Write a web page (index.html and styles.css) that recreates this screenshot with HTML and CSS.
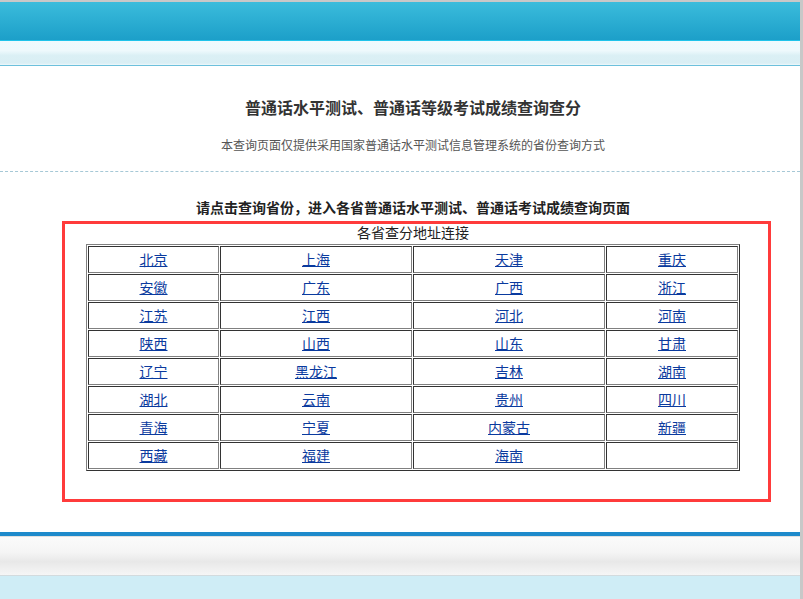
FILE: index.html
```html
<!DOCTYPE html>
<html lang="zh-CN">
<head>
<meta charset="utf-8">
<title>普通话水平测试、普通话等级考试成绩查询查分</title>
<link rel="stylesheet" href="styles.css">
</head>
<body>
<div class="page">
  <header class="header">
    <div class="header-bar"></div>
    <div class="header-sub"></div>
  </header>
  <main class="main">
    <h1 class="title">普通话水平测试、普通话等级考试成绩查询查分</h1>
    <p class="subtitle">本查询页面仅提供采用国家普通话水平测试信息管理系统的省份查询方式</p>
  </main>
  <div class="divider"></div>
  <div class="main">
    <h2 class="heading">请点击查询省份，进入各省普通话水平测试、普通话考试成绩查询页面</h2>
  </div>
  <section class="box">
    <table class="prov">
      <caption>各省查分地址连接</caption>
      <tbody>
        <tr><td class="c1"><a href="#">北京</a></td><td class="c2"><a href="#">上海</a></td><td class="c3"><a href="#">天津</a></td><td class="c4"><a href="#">重庆</a></td></tr>
        <tr><td><a href="#">安徽</a></td><td><a href="#">广东</a></td><td><a href="#">广西</a></td><td><a href="#">浙江</a></td></tr>
        <tr><td><a href="#">江苏</a></td><td><a href="#">江西</a></td><td><a href="#">河北</a></td><td><a href="#">河南</a></td></tr>
        <tr><td><a href="#">陕西</a></td><td><a href="#">山西</a></td><td><a href="#">山东</a></td><td><a href="#">甘肃</a></td></tr>
        <tr><td><a href="#">辽宁</a></td><td><a href="#">黑龙江</a></td><td><a href="#">吉林</a></td><td><a href="#">湖南</a></td></tr>
        <tr><td><a href="#">湖北</a></td><td><a href="#">云南</a></td><td><a href="#">贵州</a></td><td><a href="#">四川</a></td></tr>
        <tr><td><a href="#">青海</a></td><td><a href="#">宁夏</a></td><td><a href="#">内蒙古</a></td><td><a href="#">新疆</a></td></tr>
        <tr><td><a href="#">西藏</a></td><td><a href="#">福建</a></td><td><a href="#">海南</a></td><td></td></tr>
      </tbody>
    </table>
  </section>
  <footer class="footer">
    <div class="footer-line"></div>
    <div class="footer-band"></div>
    <div class="footer-base"></div>
  </footer>
</div>
</body>
</html>
```

FILE: styles.css
```css
html, body {
  margin: 0;
  padding: 0;
}
body {
  background: #c8c8c8;
  padding-top: 2px;
  font-family: "Noto Sans CJK SC", "Liberation Sans", sans-serif;
  overflow: hidden;
}
.page {
  width: 800px;
  background: #ffffff;
  height: 597px;
  display: flex;
  flex-direction: column;
}
.header-bar {
  height: 38px;
  background: linear-gradient(#3bbcdc, #1c9fc9);
  border-bottom: 1px solid #1fc3ea;
}
.header-sub {
  height: 24px;
  background: linear-gradient(#effafd 0%, #eef9fc 40%, #dbf0f5 60%, #d9eef4 92%, #eef8fb 100%);
  border-bottom: 1px solid #6cc0dc;
}
.main {
  padding-left: 26px;
  text-align: center;
}
.title {
  margin: 31px 0 0;
  font-size: 16px;
  line-height: 20px;
  font-weight: bold;
  color: #333333;
}
.subtitle {
  margin: 20px 0 0;
  font-size: 12px;
  line-height: 16px;
  color: #555555;
}
.divider {
  margin-top: 18px;
  border-top: 1px dashed #a6c8d6;
}
.heading {
  margin: 26px 0 0;
  font-size: 14px;
  line-height: 18px;
  font-weight: bold;
  color: #222222;
}
.box {
  margin: 5px 0 0 62px;
  width: 709px;
  height: 281px;
  box-sizing: border-box;
  border: 3px solid #ff3b3b;
}
.prov {
  margin-left: 21px;
  width: 654px;
  table-layout: fixed;
  border-collapse: separate;
  border-spacing: 1px;
  border: 1px solid;
  border-color: #808080 #333333 #333333 #808080;
  box-sizing: border-box;
}
.prov caption {
  font-size: 14px;
  line-height: 16px;
  padding-bottom: 4px;
  color: #222222;
}
.prov td {
  box-sizing: border-box;
  height: 27px;
  padding: 0 0 1px;
  border: 1px solid;
  border-color: #333333 #808080 #808080 #333333;
  text-align: center;
  vertical-align: middle;
  font-size: 14px;
  line-height: 16px;
}
.prov .c1 { width: 131px; }
.prov .c2 { width: 192px; }
.prov .c3 { width: 192px; }
.prov .c4 { width: 132px; }
.prov a,
.prov a:visited {
  color: #0a3a9e;
  text-decoration: underline;
}
.footer {
  margin-top: 30px;
  flex: 1;
  display: flex;
  flex-direction: column;
}
.footer-line {
  height: 4px;
  background: #1e8acb;
}
.footer-band {
  height: 38px;
  border-top: 1px solid #e0e0e0;
  background: linear-gradient(#fbfbfb 0%, #f5f5f5 40%, #e8e8e8 65%, #f6f6f6 100%);
  border-bottom: 1px solid #d3dbde;
}
.footer-base {
  flex: 1;
  background: #cfedf6;
}
```
